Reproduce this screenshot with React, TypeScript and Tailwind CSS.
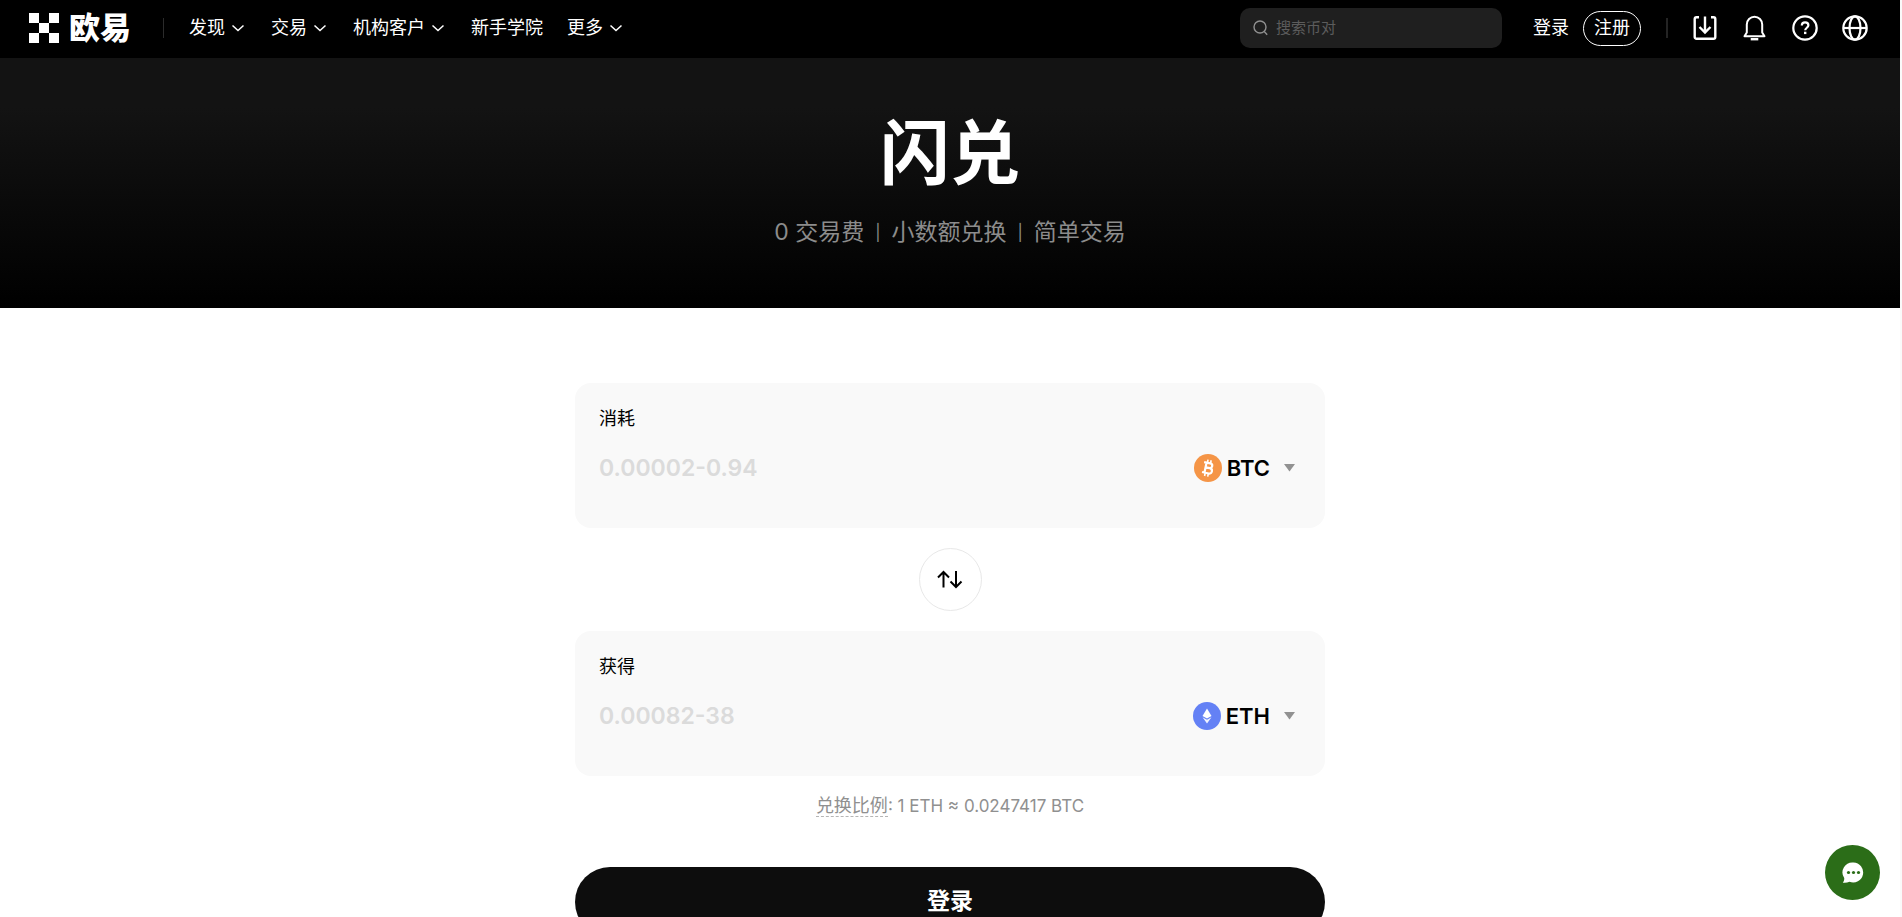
import { useState } from 'react'

interface NavItem {
  label: string
  hasMenu: boolean
}

interface Coin {
  symbol: string
  range: string
}

const NAV_ITEMS: NavItem[] = [
  { label: '发现', hasMenu: true },
  { label: '交易', hasMenu: true },
  { label: '机构客户', hasMenu: true },
  { label: '新手学院', hasMenu: false },
  { label: '更多', hasMenu: true }
]

const BTC: Coin = { symbol: 'BTC', range: '0.00002-0.94' }
const ETH: Coin = { symbol: 'ETH', range: '0.00082-38' }

function Logo() {
  return (
    <a href="#home" aria-label="欧易" className="flex items-center gap-[10px]">
      <svg viewBox="0 0 30 30" className="h-[30px] w-[30px]" fill="#fff" shapeRendering="crispEdges">
        <path d="M0 0h10v10H0zM20 0h10v10H20zM10 10h10v10H10zM0 20h10v10H0zM20 20h10v10H20z" />
      </svg>
      <span className="text-[31px] leading-8 font-black">欧易</span>
    </a>
  )
}

function Chevron() {
  return (
    <svg viewBox="0 0 14 14" className="mr-0.5 h-[14px] w-[14px]" fill="none" stroke="currentColor" strokeWidth="1.5">
      <path d="M1.500 4.500 7 9.500l5.500-5" />
    </svg>
  )
}

function DownloadIcon() {
  return (
    <svg viewBox="0 0 28 28" className="h-7 w-7" fill="none" stroke="currentColor" strokeWidth="2.4">
      <path d="M8 3.200H5.500a1.800 1.800 0 0 0-1.800 1.800v18a1.800 1.800 0 0 0 1.800 1.800h17a1.800 1.800 0 0 0 1.800-1.800V5a1.800 1.800 0 0 0-1.800-1.800H20M14 2.500v15.500M8.500 13 14 18.500l5.500-5.500" />
    </svg>
  )
}

function BellIcon() {
  return (
    <svg viewBox="0 0 28 28" className="h-7 w-7" fill="none" stroke="currentColor" strokeWidth="2">
      <path d="M5.800 18.500V10.500a7.700 7.700 0 0 1 15.400 0v8l2.300 3.700H3.500z" strokeLinejoin="round" />
      <path d="M9.700 25.200h7.600" strokeWidth="2.400" />
    </svg>
  )
}

function HelpIcon() {
  return (
    <svg viewBox="0 0 28 28" className="h-7 w-7" fill="none" stroke="currentColor" strokeWidth="2.2">
      <circle cx="14" cy="14" r="11.7" />
      <path d="M10.800 11.500c0-2 1.400-3.200 3.300-3.200s3.300 1.200 3.300 3c0 2.400-3.200 2.500-3.200 5" />
      <path d="M14.200 17.700v2.400" strokeWidth="2.400" />
    </svg>
  )
}

function GlobeIcon() {
  return (
    <svg viewBox="0 0 28 28" className="h-7 w-7" fill="none" stroke="currentColor" strokeWidth="2.2">
      <circle cx="14" cy="14" r="11.7" />
      <ellipse cx="14" cy="14" rx="5.500" ry="11.700" />
      <path d="M2.500 14h23" />
    </svg>
  )
}

function CoinIcon({ symbol }: { symbol: string }) {
  if (symbol === 'BTC') {
    return (
      <svg viewBox="0 0 28 28" className="h-7 w-7">
        <circle cx="14" cy="14" r="14" fill="#f59547" />
        <g transform="rotate(12 14 14)" fill="none" stroke="#fff" strokeWidth="2.2">
          <path d="M9 9h6.300a2.400 2.400 0 0 1 0 4.800H11h4.800a2.700 2.700 0 0 1 0 5.400H9M11.500 9v10.200" />
          <path d="M12.300 5.800v3M15.500 5.800v3M12.300 19.500v3M15.500 19.500v3" strokeWidth="1.600" />
        </g>
      </svg>
    )
  }

  return (
    <svg viewBox="0 0 28 28" className="h-7 w-7">
      <circle cx="14" cy="14" r="14" fill="#6481f5" />
      <path d="M14 6.500 9.500 14 14 16.600 18.500 14z" fill="#fff" />
      <path d="m9.500 15.300 4.500 6.200 4.500-6.200-4.500 2.500z" fill="#fff" fillOpacity="0.9" />
    </svg>
  )
}

function Header() {
  return (
    <header className="flex h-[58px] items-center justify-between bg-black pr-[31px] pb-0.5 pl-[29px] text-white">
      <div className="flex items-center">
        <Logo />
        <div className="ml-8 h-5 w-px bg-[#2b2b2b]" />
        <nav className="ml-[25px] flex items-center gap-6 text-lg">
          {NAV_ITEMS.map(item =>
            item.hasMenu ? (
              <button key={item.label} className="flex items-center gap-[6px] whitespace-nowrap">
                {item.label}
                <Chevron />
              </button>
            ) : (
              <a key={item.label} href="#learn" className="whitespace-nowrap">
                {item.label}
              </a>
            )
          )}
        </nav>
      </div>

      <div className="flex items-center">
        <label className="flex h-10 w-[262px] items-center gap-2 rounded-[10px] bg-[#1f1f1f] px-3">
          <svg viewBox="0 0 16 16" className="h-4 w-4 shrink-0" fill="none" stroke="#909090" strokeWidth="1.4">
            <circle cx="8" cy="7" r="6" />
            <path d="m12.200 11.500 3 3.200" />
          </svg>
          <input
            type="text"
            aria-label="搜索币对"
            placeholder="搜索币对"
            className="w-full min-w-0 bg-transparent text-[15px] text-white outline-none placeholder:text-[#5c5c5c]"
          />
        </label>
        <a href="#login" className="ml-[31px] text-lg">
          登录
        </a>
        <a
          href="#register"
          className="ml-[14px] flex h-[35px] items-center rounded-full border border-white px-[10px] text-lg"
        >
          注册
        </a>
        <div className="ml-[25px] h-5 w-0.5 bg-[#242424]" />
        <div className="ml-[23px] flex items-center gap-[22px]">
          <button aria-label="下载">
            <DownloadIcon />
          </button>
          <button aria-label="通知">
            <BellIcon />
          </button>
          <button aria-label="帮助">
            <HelpIcon />
          </button>
          <button aria-label="语言">
            <GlobeIcon />
          </button>
        </div>
      </div>
    </header>
  )
}

interface AmountCardProps {
  id: string
  label: string
  coin: Coin
}

function AmountCard({ id, label, coin }: AmountCardProps) {
  const [amount, setAmount] = useState('')

  return (
    <div className="h-[145px] rounded-2xl bg-[#f9f9f9] px-6 pt-[22px]">
      <label htmlFor={id} className="block text-lg leading-7">
        {label}
      </label>
      <div className="mt-[15px] flex items-center justify-between">
        <input
          id={id}
          type="text"
          value={amount}
          onChange={e => setAmount(e.target.value)}
          placeholder={coin.range}
          className="h-10 min-w-0 flex-1 bg-transparent text-[23px] font-semibold outline-none placeholder:text-[#dbdbdb]"
        />
        <button className="flex items-center pr-[6px] text-[22px] font-semibold">
          <CoinIcon symbol={coin.symbol} />
          <span className="ml-[5px]">{coin.symbol}</span>
          <svg viewBox="0 0 11 8" className="ml-[14px] h-2 w-[11px]" fill="#929292">
            <path d="M0 0h11L5.500 7.500z" />
          </svg>
        </button>
      </div>
    </div>
  )
}

export default function App() {
  const [reversed, setReversed] = useState(false)
  const from = reversed ? ETH : BTC
  const to = reversed ? BTC : ETH

  return (
    <div className="min-h-screen border-r-2 border-[#fafafa] bg-white font-[Inter,'Noto_Sans_CJK_SC',sans-serif] text-black">
      <Header />

      <section className="flex h-[250px] flex-col items-center bg-linear-to-b/srgb from-[#131313] from-20% to-black pt-12">
        <h1 className="text-[70px] leading-[96px] font-bold text-white">闪兑</h1>
        <p className="mt-[14px] flex items-center gap-[11px] text-[23px] leading-8 text-[#8c8c8c]">
          <span>0 交易费</span>
          <span className="text-base">|</span>
          <span>小数额兑换</span>
          <span className="text-base">|</span>
          <span>简单交易</span>
        </p>
      </section>

      <main className="mx-auto mt-[75px] flex max-w-[750px] flex-col">
        <AmountCard id="spend" label="消耗" coin={from} />
        <button
          aria-label="切换"
          onClick={() => setReversed(!reversed)}
          className="my-5 flex h-[63px] w-[63px] items-center justify-center self-center rounded-full border border-[#e8e8e8]"
        >
          <svg viewBox="0 0 26 20" className="h-5 w-[26px]" fill="none" stroke="currentColor" strokeWidth="2">
            <path d="M6.500 17.500V2M1 7.500l5.500-5.500 5.500 5.500M19 1v15.500M13.500 11.500l5.500 5.500 5.500-5.500" />
          </svg>
        </button>
        <AmountCard id="receive" label="获得" coin={to} />

        <p className="mt-[18px] text-center text-[17px] leading-6 text-[#909090]">
          <span className="border-b border-dashed border-[#b5b5b5] text-lg leading-6">兑换比例</span>
          {': 1 ETH ≈ 0.0247417 BTC'}
        </p>

        <button className="mt-[49px] h-[70px] rounded-full bg-[#0d0d0d] pb-0.5 text-[23px] font-bold text-white">
          登录
        </button>
      </main>

      <button
        aria-label="在线客服"
        className="fixed right-[22px] bottom-[17px] flex h-[55px] w-[55px] items-center justify-center rounded-full bg-[#2b6d18]"
      >
        <svg viewBox="0 0 22 22" className="h-[22px] w-[22px]">
          <path d="M11.500.5a10 10 0 1 1-4 19.300c-2 1-4.500 1.200-6.700.9C2 19.300 2.400 17.800 2.200 16A10 10 0 0 1 11.500.5z" fill="#fff" />
          <circle cx="6.500" cy="10.500" r="1.600" fill="#2b6d18" />
          <circle cx="11.500" cy="10.500" r="1.600" fill="#2b6d18" />
          <circle cx="16.500" cy="10.500" r="1.600" fill="#2b6d18" />
        </svg>
      </button>
    </div>
  )
}
